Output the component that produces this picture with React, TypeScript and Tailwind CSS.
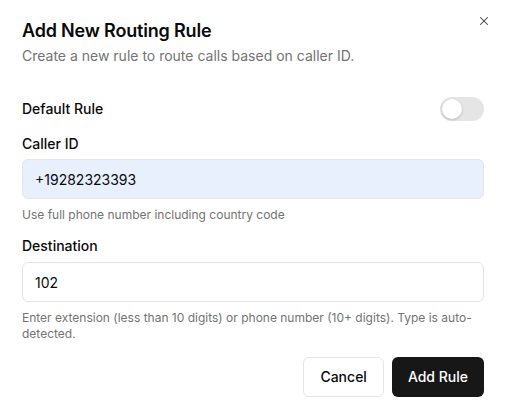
import { X } from 'lucide-react';

export default function App() {
  return (
    <div className="min-h-screen bg-white font-['Inter',sans-serif] text-[#0a0a0a]">
      <div className="relative pl-[22px] pr-[23px] pt-[22px] pb-5">
        <button className="absolute right-[16px] top-[14px] text-[#404040]">
          <X size={14} strokeWidth={1.75} />
        </button>

        {/* header */}
        <div className="flex flex-col gap-[6px]">
          <h2 className="text-lg font-semibold leading-[18px] tracking-[-0.01em]">Add New Routing Rule</h2>
          <p className="text-sm leading-5 text-[#737373]">Create a new rule to route calls based on caller ID.</p>
        </div>

        {/* form */}
        <div className="mt-[31px] flex flex-col gap-4">
          <div className="flex items-center justify-between">
            <span className="text-sm font-medium leading-none">Default Rule</span>
            <button className="flex h-6 w-11 items-center rounded-full bg-[#e5e5e5] p-[2px]">
              <span className="h-5 w-5 rounded-full bg-white shadow-[0_1px_3px_rgba(0,0,0,0.2)]" />
            </button>
          </div>

          <div className="flex flex-col">
            <label className="text-sm font-medium leading-[14px]">Caller ID</label>
            <input
              readOnly
              value="+19282323393"
              className="mt-2 h-10 w-full rounded-md border border-[#e5e5e5] bg-[#e8f0fe] px-3 text-sm outline-none"
            />
            <p className="mt-2 text-xs leading-4 text-[#737373]">Use full phone number including country code</p>
          </div>

          <div className="flex flex-col">
            <label className="text-sm font-medium leading-[14px]">Destination</label>
            <input
              readOnly
              value="102"
              className="mt-[9px] h-10 w-full rounded-md border border-[#e5e5e5] bg-white px-3 text-sm outline-none"
            />
            <p className="mt-2 text-xs leading-4 text-[#737373]">
              Enter extension (less than 10 digits) or phone number (10+ digits). Type is auto-detected.
            </p>
          </div>
        </div>

        {/* footer */}
        <div className="mt-[15px] flex justify-end gap-2">
          <button className="h-10 rounded-md border border-[#e5e5e5] bg-white px-4 text-sm font-medium">Cancel</button>
          <button className="h-10 rounded-md bg-[#171717] px-4 text-sm font-medium text-white">Add Rule</button>
        </div>
      </div>
    </div>
  );
}
